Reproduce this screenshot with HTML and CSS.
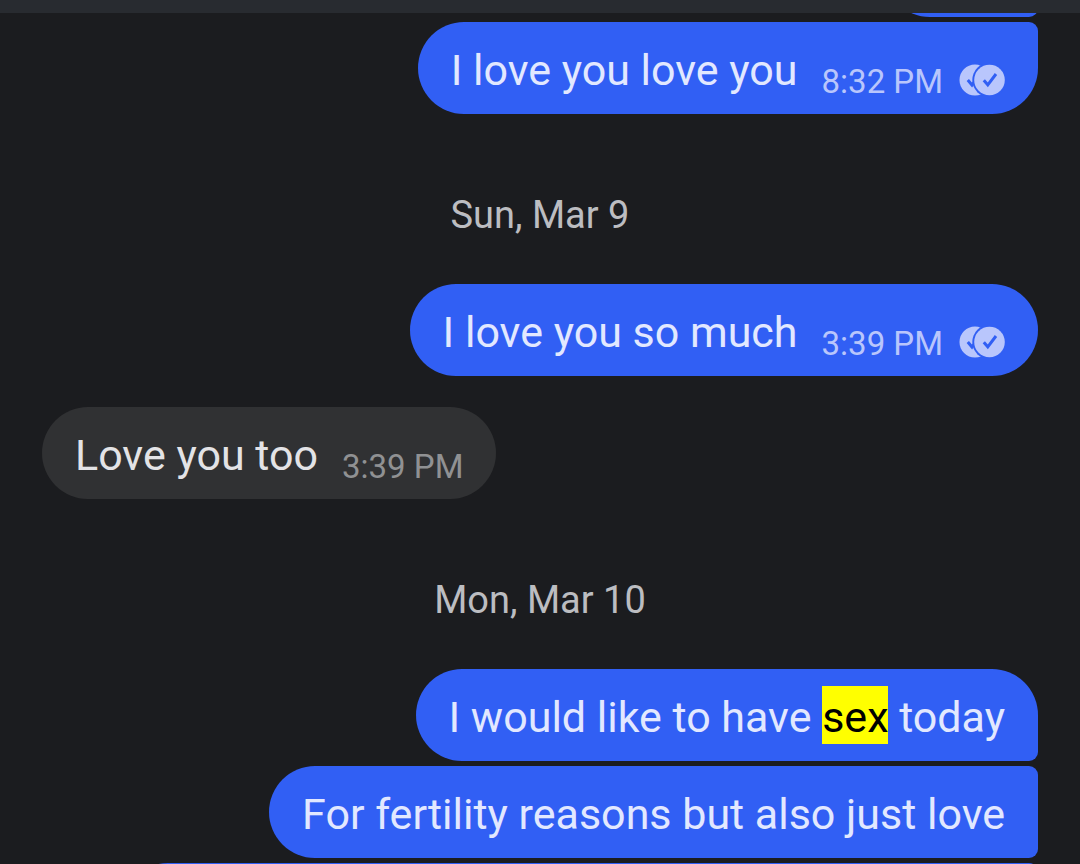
FILE: index.html
```html
<!DOCTYPE html>
<html lang="en">
<head>
<meta charset="utf-8">
<meta name="viewport" content="width=device-width, initial-scale=1">
<title>Conversation</title>
<link rel="stylesheet" href="styles.css">
</head>
<body>
<svg class="defs" aria-hidden="true">
  <symbol id="read" viewBox="0 0 46 32">
    <circle cx="16" cy="16" r="15.500" fill="currentColor"/>
    <path d="M8.800 16L13 21L21 10.500" fill="none" stroke="#315ff4" stroke-width="3"/>
    <circle cx="30.500" cy="16" r="17.200" fill="#315ff4"/>
    <circle cx="30.500" cy="16" r="15.300" fill="currentColor"/>
    <path d="M24.800 16.200L28.800 20.800L37 10" fill="none" stroke="#315ff4" stroke-width="3"/>
  </symbol>
</svg>
<div class="app">
  <header class="topbar"></header>
  <main class="thread">
    <div class="bubble sent joined-below earlier"></div>
    <div class="bubble sent joined-above">
      <p class="text">I love you love you</p>
      <span class="meta"><time>8:32 PM</time><svg class="read" role="img" aria-label="Read"><use href="#read"/></svg></span>
    </div>
    <h2 class="date">Sun, Mar 9</h2>
    <div class="bubble sent">
      <p class="text">I love you so much</p>
      <span class="meta"><time>3:39 PM</time><svg class="read" role="img" aria-label="Read"><use href="#read"/></svg></span>
    </div>
    <div class="bubble received">
      <p class="text">Love you too</p>
      <span class="meta"><time>3:39 PM</time></span>
    </div>
    <h2 class="date">Mon, Mar 10</h2>
    <div class="bubble sent joined-below">
      <p class="text">I would like to have <mark>sex</mark> today</p>
    </div>
    <div class="bubble sent joined-above joined-below">
      <p class="text">For fertility reasons but also just love</p>
    </div>
    <div class="bubble sent joined-above later"></div>
  </main>
</div>
</body>
</html>
```
FILE: styles.css
```css
* { box-sizing: border-box; }
body {
  margin: 0;
  background: #1b1c1f;
  font-family: Roboto, "Liberation Sans", sans-serif;
}
.defs { display: none; }
.app {
  display: flex;
  flex-direction: column;
  height: 100vh;
  overflow: hidden;
}
.topbar {
  flex: none;
  height: 13px;
  background: #282b30;
}
.thread {
  flex: 1;
  min-height: 0;
  display: flex;
  flex-direction: column;
  padding: 0 42px;
  overflow: hidden;
}
.bubble {
  flex: none;
  display: flex;
  align-items: center;
  gap: 24px;
  max-width: 90%;
  min-height: 92px;
  padding: 16px 33px 12px;
  border-radius: 46px;
}
.sent {
  align-self: flex-end;
  background: #315ff4;
  color: #e2e8ff;
}
.received {
  align-self: flex-start;
  margin-top: 31px;
  background: #303133;
  color: #e3e3e6;
}
.joined-above {
  margin-top: 5px;
  border-top-right-radius: 9px;
}
.joined-below { border-bottom-right-radius: 9px; }
.earlier {
  width: 154px;
  margin-top: -88px;
}
.later {
  width: 92%;
  max-width: none;
}
.text {
  margin: 0;
  font-size: 43px;
  line-height: 58px;
}
mark {
  padding: 6px 0 2px;
  background: #ffff00;
  color: #000;
}
.meta {
  display: flex;
  align-items: center;
  gap: 16px;
  padding-top: 20px;
  font-size: 33px;
  line-height: 36px;
  color: #b9c6fc;
}
.meta time { padding-top: 4px; }
.received .meta { color: #909193; }
.read {
  width: 46px;
  height: 32px;
}
.date {
  flex: none;
  margin: 0;
  padding: 76px 0 44px;
  font-size: 38px;
  font-weight: 400;
  line-height: 50px;
  text-align: center;
  color: #bcbdc1;
}
```
